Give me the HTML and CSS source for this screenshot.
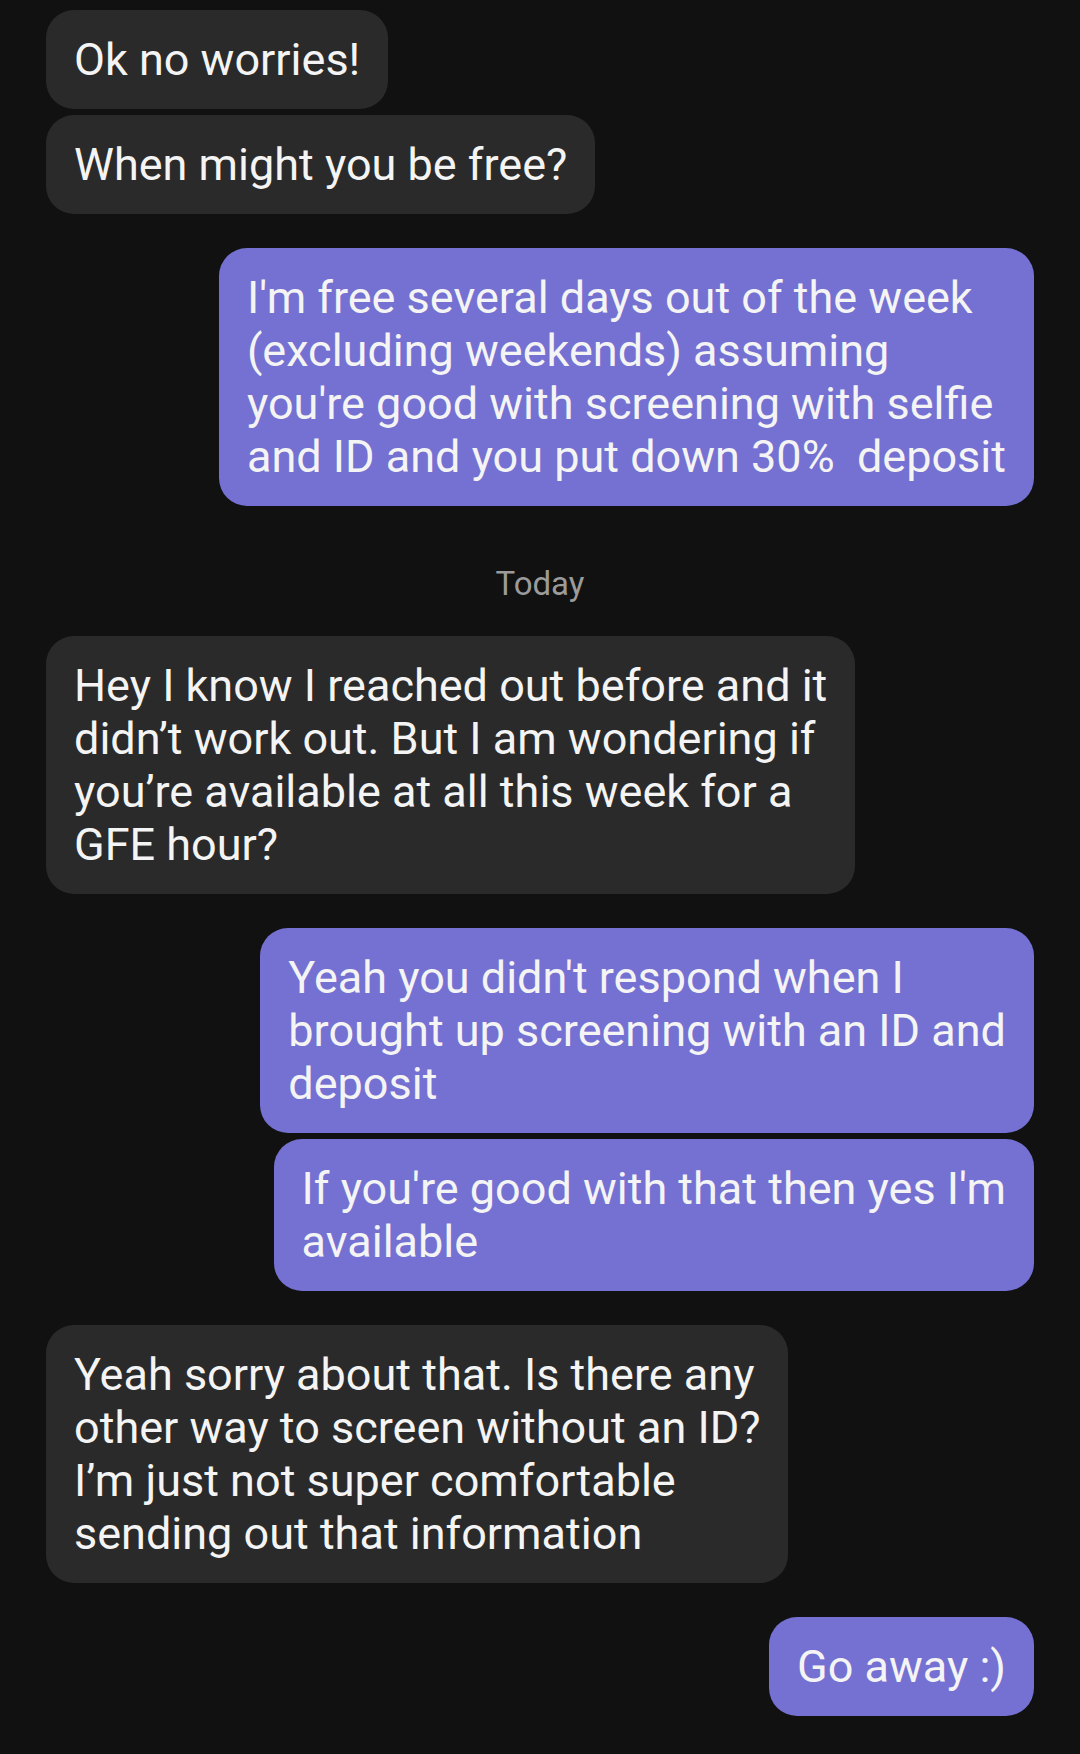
FILE: index.html
```html
<!DOCTYPE html>
<html lang="en">

<head>
    <meta charset="UTF-8">
    <meta name="viewport" content="width=device-width, initial-scale=1.0">
    <title>Messages</title>
    <link rel="stylesheet" href="styles.css">
</head>

<body>
    <div class="chat">
        <div class="msg in">Ok no worries!</div>
        <div class="msg in next">When might you be free?</div>

        <div class="msg out">I'm free several days out of the week<br>(excluding weekends) assuming<br>you're good with screening with selfie<br>and ID and you put down 30%&nbsp; deposit</div>

        <div class="day">Today</div>

        <div class="msg in first">Hey I know I reached out before and it<br>didn’t work out. But I am wondering if<br>you’re available at all this week for a<br>GFE hour?</div>

        <div class="msg out">Yeah you didn't respond when I<br>brought up screening with an ID and<br>deposit</div>
        <div class="msg out next">If you're good with that then yes I'm<br>available</div>

        <div class="msg in">Yeah sorry about that. Is there any<br>other way to screen without an ID?<br>I’m just not super comfortable<br>sending out that information</div>

        <div class="msg out">Go away :)</div>
    </div>
</body>

</html>
```

FILE: styles.css
```css
* {
    margin: 0;
    padding: 0;
    box-sizing: border-box;
}

body {
    background-color: #111111;
    font-family: Roboto, "Noto Sans", sans-serif;
    color: #f4f4f4;
}

.chat {
    display: flex;
    flex-direction: column;
    padding: 10px 46px;
}

.msg {
    font-size: 45px;
    line-height: 53px;
    padding: 23px 28px 23px;
    border-radius: 28px;
    margin-top: 34px;
    white-space: nowrap;
}

/* 同一组的消息靠得更近 */
.msg.next {
    margin-top: 6px;
}

.msg:first-child,
.msg.first {
    margin-top: 0;
}

.in {
    align-self: flex-start;
    background-color: #2a2a2a;
}

.out {
    align-self: flex-end;
    background-color: #7571d2;
}

.day {
    text-align: center;
    color: #9b9b9b;
    font-size: 33px;
    line-height: 53px;
    margin: 51px 0 26px;
}
```
